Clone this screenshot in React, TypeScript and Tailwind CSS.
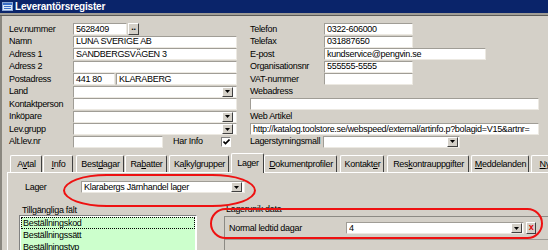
import React from "react";

const FONT = "font-['Liberation_Sans',Arial,sans-serif]";

function Box({ className = "", children }: { className?: string; children?: React.ReactNode }) {
  return (
    <div
      className={`flex h-[12px] items-center overflow-hidden whitespace-nowrap border border-t-[#a09d96] border-l-[#a09d96] border-r-[#ece9e2] border-b-[#ece9e2] bg-white pl-[2px] leading-none ${className}`}
    >
      {children}
    </div>
  );
}

function Arrow() {
  return (
    <div className="flex h-[10px] w-[11px] shrink-0 items-center justify-center border border-t-white border-l-white border-r-[#404040] border-b-[#404040] bg-[#d4d0c8]">
      <svg width="5" height="3" viewBox="0 0 5 3">
        <path d="M0 0h5L2.5 3z" fill="#000" />
      </svg>
    </div>
  );
}

function Drop({ className = "", value = "" }: { className?: string; value?: string }) {
  return (
    <Box className={`pr-[1px] ${className}`}>
      <span className="flex-1 overflow-hidden">{value}</span>
      <Arrow />
    </Box>
  );
}

function Row({ label, lw = "w-[64px]", children }: { label?: string; lw?: string; children?: React.ReactNode }) {
  return (
    <div className="flex h-[12.5px] items-center">
      {label && <span className={`${lw} shrink-0 whitespace-nowrap leading-none`}>{label}</span>}
      {children}
    </div>
  );
}

const tabs = [
  { label: "Avtal", u: 1, slot: "w-[33px]", box: "w-[32px]" },
  { label: "Info", u: 0, slot: "w-[33px]", box: "w-[30px]" },
  { label: "Bestdagar", u: 4, slot: "w-[49px]", box: "w-[48px]" },
  { label: "Rabatter", u: 2, slot: "w-[44px]", box: "w-[42px]" },
  { label: "Kalkylgrupper", u: 2, slot: "w-[62px]", box: "w-[60px]" },
  { label: "Lager", u: -1, slot: "w-[33px]", box: "w-[33px]", active: true },
  { label: "Dokumentprofiler", u: 0, slot: "w-[76px]", box: "w-[73px]" },
  { label: "Kontakter", u: 7, slot: "w-[47px]", box: "w-[44px]" },
  { label: "Reskontrauppgifter", u: 3, slot: "w-[84px]", box: "w-[82px]" },
  { label: "Meddelanden", u: 0, slot: "w-[60px]", box: "w-[58px]" },
  { label: "Nyckeltal", u: 0, slot: "w-[50px]", box: "w-[50px]" },
];

function TabLabel({ label, u }: { label: string; u: number }) {
  if (u < 0) return <>{label}</>;
  return (
    <>
      {label.slice(0, u)}
      <span className="underline">{label[u]}</span>
      {label.slice(u + 1)}
    </>
  );
}

export default function App() {
  return (
    <div className={`relative h-[250px] w-[548px] overflow-hidden bg-[#d4d0c8] text-[9px] tracking-[-0.3px] text-black ${FONT}`}>
      {/* title bar */}
      <div className="flex h-[13px] items-center bg-[#0a246a] pl-[2px]">
        <svg width="11" height="9" viewBox="0 0 11 9">
          <rect x="0.5" y="0.5" width="10" height="8" fill="#dce8f8" stroke="#8aa6d6" />
          <rect x="1" y="1" width="9" height="2" fill="#3a6ec8" />
          <path d="M2 4.5h7M2 6.5h7" stroke="#3a6ec8" />
        </svg>
        <span className="ml-[2px] text-[10px] font-bold tracking-[-0.2px] text-white">Leverantörsregister</span>
      </div>
      <div className="h-[2px] bg-[#a09d96]" />
      <div className="h-[1px] bg-[#5c5b57]" />

      <div className="h-[234px] border-l-2 border-[#8a877f]">
        {/* form */}
        <div className="flex pl-[7px] pt-[7px]">
          <div className="w-[228px]">
            <Row label="Lev.nummer">
              <Box className="w-[54px]">5628409</Box>
              <div className="ml-[1px] flex h-[12px] w-[11px] items-center justify-center border border-t-white border-l-white border-r-[#404040] border-b-[#404040] pb-[3px] font-bold leading-none">
                ..
              </div>
            </Row>
            <Row label="Namn">
              <Box className="w-[164px]">LUNA SVERIGE AB</Box>
            </Row>
            <Row label="Adress 1">
              <Box className="w-[164px]">SANDBERGSVÄGEN 3</Box>
            </Row>
            <Row label="Adress 2">
              <Box className="w-[164px]" />
            </Row>
            <Row label="Postadress">
              <Box className="w-[42px]">441 80</Box>
              <Box className="ml-[1px] w-[121px]">KLARABERG</Box>
            </Row>
            <Row label="Land">
              <Drop className="w-[164px] pr-[3px]" />
            </Row>
            <Row label="Kontaktperson">
              <Box className="w-[164px]" />
            </Row>
            <Row label="Inköpare">
              <Drop className="w-[164px] pr-[3px]" />
            </Row>
            <Row label="Lev.grupp">
              <Drop className="w-[164px] pr-[3px]" />
            </Row>
            <Row label="Alt.lev.nr">
              <Box className="w-[90px]" />
              <span className="ml-[10px] w-[48px] leading-none">Har Info</span>
              <div className="flex h-[10px] w-[10px] items-center justify-center border border-t-[#808080] border-l-[#808080] border-r-white border-b-white bg-white">
                <svg width="7" height="6" viewBox="0 0 7 6">
                  <path d="M0.5 2.5l2 2 4-4" stroke="#000" strokeWidth="1.6" fill="none" />
                </svg>
              </div>
            </Row>
          </div>

          <div className="ml-[13px] w-[289px]">
            <Row label="Telefon" lw="w-[74px]">
              <Box className="w-[89px]">0322-606000</Box>
            </Row>
            <Row label="Telefax" lw="w-[74px]">
              <Box className="w-[89px]">031887650</Box>
            </Row>
            <Row label="E-post" lw="w-[74px]">
              <Box className="w-[162px]">kundservice@pengvin.se</Box>
            </Row>
            <Row label="Organisationsnr" lw="w-[74px]">
              <Box className="w-[89px]">555555-5555</Box>
            </Row>
            <Row label="VAT-nummer" lw="w-[74px]">
              <Box className="w-[89px]" />
            </Row>
            <Row label="Webadress" />
            <Row>
              <Box className="w-[289px]" />
            </Row>
            <Row label="Web Artikel" />
            <Row>
              <Box className="w-[289px]">http://katalog.toolstore.se/webspeed/external/artinfo.p?bolagid=V15&amp;artnr=</Box>
            </Row>
            <Row label="Lagerstyrningsmall" lw="w-[73px]">
              <Drop className="w-[137px]" />
            </Row>
          </div>
        </div>

        {/* tab control */}
        <div className="ml-[5px] mt-[5px]">
          <div className="flex h-[19px] items-end pl-[3px]">
            {tabs.map((t) => (
              <div key={t.label} className={`${t.slot} shrink-0`}>
                <div
                  className={`${t.box} flex items-center justify-center overflow-hidden whitespace-nowrap rounded-t-[2px] border-l border-t border-r border-l-white border-t-white border-r-[#404040] leading-none ${
                    t.active ? "relative -mb-[1px] h-[20px] bg-[#d4d0c8]" : "h-[17px]"
                  }`}
                >
                  <span className="pl-[1px]">
                    <TabLabel label={t.label} u={t.u} />
                  </span>
                </div>
              </div>
            ))}
          </div>

          <div className="h-[80px] border-l border-t border-white">
            <div className="mt-[8px] flex h-[12px] items-center pl-[17px]">
              <span className="w-[56px] leading-none">Lager</span>
              <Drop className="w-[164px] pr-[2px]" value="Klarabergs Järnhandel lager" />
            </div>

            <div className="mt-[12px] flex">
              <div className="ml-[11px] w-[178px]">
                <div className="h-[10px] pl-[3px] leading-[10px]">Tillgängliga fält</div>
                <div className="h-[40px] border border-t-[#808080] border-l-[#808080] border-r-white border-b-white bg-white p-[1px]">
                  <div className="flex h-[12px] items-center bg-[#ccffcc] pl-[2px] leading-none outline-1 -outline-offset-1 outline-dotted outline-black">
                    Beställningskod
                  </div>
                  <div className="flex h-[12px] items-center bg-[#ccffcc] pl-[2px] leading-none">Beställningssätt</div>
                  <div className="flex h-[12px] items-center bg-[#ccffcc] pl-[2px] leading-none">Beställningstyp</div>
                </div>
              </div>

              <div className="ml-[27px] flex-1">
                <div className="h-[10px] pl-[2px] leading-[9px]">Lagerunik data</div>
                <div className="mt-[1px] h-[40px] border-l border-t border-[#8c8a84]">
                  <div className="flex h-[23px] items-center border-b border-[#a09d96] pl-[4px]">
                    <span className="w-[117px] leading-none">Normal ledtid dagar</span>
                    <Drop className="w-[178px]" value="4" />
                    <div className="ml-[2px] flex h-[12px] w-[10px] items-center justify-center border border-t-white border-l-white border-r-[#404040] border-b-[#404040] pb-[2px] font-bold leading-none text-[#e00000]">
                      x
                    </div>
                  </div>
                </div>
              </div>
            </div>
          </div>
        </div>
      </div>

      {/* red annotation rings */}
      <div className="absolute left-[63px] top-[174px] h-[33px] w-[193px] rounded-[45px/17px] border-2 border-[#ee1111]" />
      <div className="absolute left-[210px] top-[208px] h-[31px] w-[333px] rounded-full border-2 border-[#ee1111]" />
    </div>
  );
}
